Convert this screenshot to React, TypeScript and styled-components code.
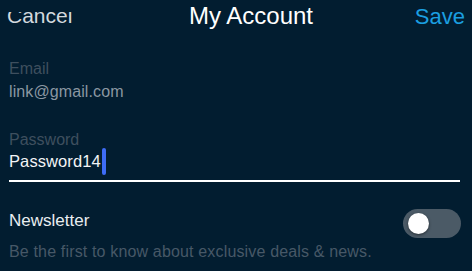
import React from "react";
import styled, { createGlobalStyle } from "styled-components";

const Global = createGlobalStyle`
  html, body { margin: 0; padding: 0; background: #021d30; }
  body { font-family: "Liberation Sans", Arial, sans-serif; }
`;

const Page = styled.div`
  width: 472px;
  height: 271px;
  background: #021d30;
  overflow: hidden;
  box-sizing: border-box;
`;

const Header = styled.header`
  display: grid;
  grid-template-columns: 1fr auto 1fr;
  align-items: start;
  padding: 2px 7px 0 7px;
  height: 30px;
  box-sizing: border-box;
`;

const Cancel = styled.span`
  font-size: 21px;
  line-height: 28px;
  color: #d3d9de;
  justify-self: start;
  clip-path: inset(10px 0 0 0);
`;

const Title = styled.h1`
  margin: 0;
  padding-left: 30px;
  font-size: 24px;
  line-height: 28px;
  font-weight: 400;
  color: #ffffff;
`;

const Save = styled.span`
  font-size: 22px;
  line-height: 28px;
  color: #1b9fe1;
  justify-self: end;
  padding-top: 1px;
`;

const Form = styled.div`
  padding: 0 12px 0 9px;
`;

const Field = styled.div<{ $top: number; $underline?: boolean }>`
  margin-top: ${(p) => p.$top}px;
  padding-bottom: ${(p) => (p.$underline ? 5 : 0)}px;
  border-bottom: ${(p) => (p.$underline ? "2px solid #ffffff" : "none")};
`;

const Label = styled.div`
  font-size: 16px;
  line-height: 20px;
  color: #3e4f5e;
`;

const Value = styled.div<{ $active?: boolean }>`
  display: flex;
  align-items: center;
  height: ${(p) => (p.$active ? 27 : 20)}px;
  margin-top: ${(p) => (p.$active ? -2 : 3)}px;
  font-size: ${(p) => (p.$active ? 16.5 : 16)}px;
  line-height: ${(p) => (p.$active ? 22 : 20)}px;
  letter-spacing: 0.1px;
  color: ${(p) => (p.$active ? "#f2f4f6" : "#8b97a2")};
`;

const Caret = styled.span`
  display: inline-block;
  width: 4px;
  height: 27px;
  margin-left: 1px;
  border-radius: 2px;
  background: #3e6cf6;
`;

const ToggleRow = styled.div`
  display: flex;
  justify-content: space-between;
  align-items: flex-start;
  margin-top: 28px;
`;

const ToggleText = styled.div`
  display: flex;
  flex-direction: column;
`;

const ToggleTitle = styled.div`
  font-size: 17px;
  line-height: 22px;
  color: #e9edf0;
`;

const ToggleDesc = styled.div`
  margin-top: 10.5px;
  font-size: 16px;
  line-height: 20px;
  letter-spacing: 0.16px;
  color: #475867;
`;

const Switch = styled.div`
  position: relative;
  width: 58px;
  height: 29px;
  margin-top: -1px;
  margin-right: -1px;
  border-radius: 15px;
  background: #4b5a66;
  flex-shrink: 0;
`;

const Knob = styled.div`
  position: absolute;
  left: 5px;
  top: 4px;
  width: 21px;
  height: 21px;
  border-radius: 50%;
  background: #ffffff;
  box-shadow: 0 1px 3px rgba(0, 0, 0, 0.5);
`;

export default function App() {
  return (
    <Page>
      <Global />
      <Header>
        <Cancel>Cancel</Cancel>
        <Title>My Account</Title>
        <Save>Save</Save>
      </Header>
      <Form>
        <Field $top={28.5}>
          <Label>Email</Label>
          <Value>link@gmail.com</Value>
        </Field>
        <Field $top={28} $underline>
          <Label>Password</Label>
          <Value $active>
            Password14
            <Caret />
          </Value>
        </Field>
        <ToggleRow>
          <ToggleText>
            <ToggleTitle>Newsletter</ToggleTitle>
            <ToggleDesc>Be the first to know about exclusive deals &amp; news.</ToggleDesc>
          </ToggleText>
          <Switch>
            <Knob />
          </Switch>
        </ToggleRow>
      </Form>
    </Page>
  );
}
